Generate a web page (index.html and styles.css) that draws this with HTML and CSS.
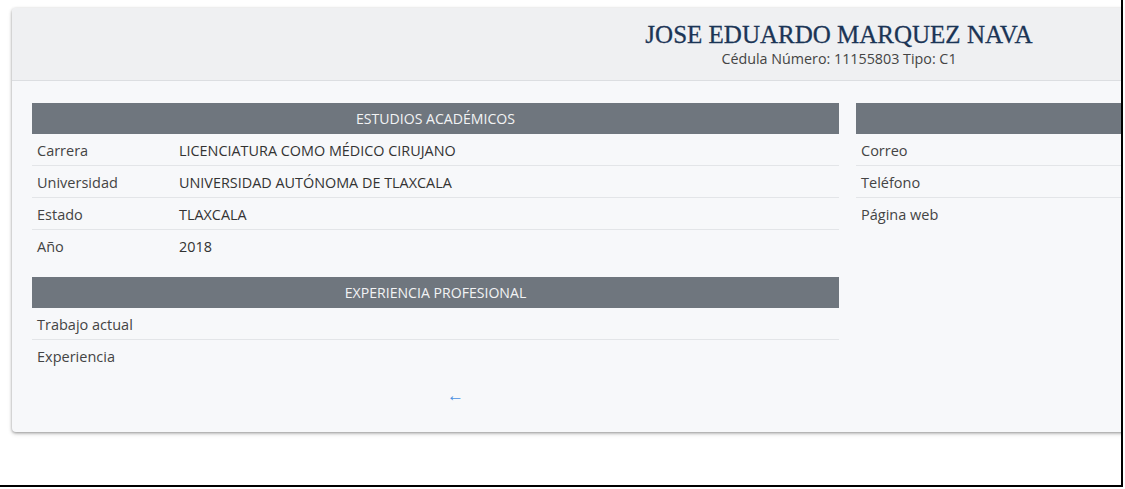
FILE: index.html
```html
<!DOCTYPE html>
<html lang="es">
<head>
<meta charset="utf-8">
<title>JOSE EDUARDO MARQUEZ NAVA</title>
<link rel="stylesheet" href="styles.css">
</head>
<body>
<div class="frame">
  <div class="card">
    <div class="card-header">
      <h1 class="name">JOSE EDUARDO MARQUEZ NAVA</h1>
      <div class="cedula">Cédula Número: 11155803 Tipo: C1</div>
    </div>
    <div class="card-body">
      <div class="col-main">
        <table class="info">
          <tr><th colspan="2" class="bar">ESTUDIOS ACADÉMICOS</th></tr>
          <tr><td class="lbl">Carrera</td><td class="val">LICENCIATURA COMO MÉDICO CIRUJANO</td></tr>
          <tr><td class="lbl">Universidad</td><td class="val">UNIVERSIDAD AUTÓNOMA DE TLAXCALA</td></tr>
          <tr><td class="lbl">Estado</td><td class="val">TLAXCALA</td></tr>
          <tr class="last"><td class="lbl">Año</td><td class="val">2018</td></tr>
        </table>
        <table class="info second">
          <tr><th colspan="2" class="bar">EXPERIENCIA PROFESIONAL</th></tr>
          <tr><td class="lbl">Trabajo actual</td><td class="val"></td></tr>
          <tr class="last"><td class="lbl">Experiencia</td><td class="val"></td></tr>
        </table>
        <div class="back"><a href="#" class="back-link">&larr;</a></div>
      </div>
      <div class="col-side">
        <table class="info">
          <tr><th colspan="2" class="bar">&nbsp;</th></tr>
          <tr><td class="lbl">Correo</td><td class="val"></td></tr>
          <tr><td class="lbl">Teléfono</td><td class="val"></td></tr>
          <tr class="last"><td class="lbl">Página web</td><td class="val"></td></tr>
        </table>
      </div>
    </div>
  </div>
</div>
</body>
</html>
```
FILE: styles.css
```css
html, body {
  margin: 0;
  padding: 0;
  background: #ffffff;
  overflow: hidden;
}
body {
  font-family: "Open Sans", "Liberation Sans", sans-serif;
  font-size: 14px;
  color: #333;
}
.frame {
  width: 1123px;
  height: 487px;
  border-right: 2px solid #000;
  border-bottom: 2px solid #000;
  overflow: hidden;
  padding: 8px 0 0 12px;
  box-sizing: border-box;
}
.card {
  width: 1654px;
  background: #f7f8fa;
  border-radius: 4px;
  box-shadow: 0 1px 3px rgba(0,0,0,0.35), 0 2px 5px rgba(0,0,0,0.12);
}
.card-header {
  background: #eff0f2;
  border-bottom: 1px solid #dcdee1;
  height: 73px;
  box-sizing: border-box;
  padding-top: 12px;
  text-align: center;
  border-radius: 4px 4px 0 0;
}
.name {
  margin: 0;
  font-family: "Liberation Serif", "Times New Roman", serif;
  font-weight: normal;
  font-size: 25px;
  line-height: 29px;
  color: #1b3556;
  -webkit-text-stroke: 0.3px #1b3556;
}
.cedula {
  font-size: 14.3px;
  line-height: 19px;
  color: #444;
}
.card-body {
  display: grid;
  grid-template-columns: 807px 1fr;
  column-gap: 17px;
  padding: 22px 20px 0 20px;
}
.info {
  width: 100%;
  border-collapse: collapse;
}
.info.second {
  margin-top: 16px;
}
.bar {
  background: #6f767e;
  color: #f2f3f4;
  font-weight: normal;
  font-size: 14.1px;
  height: 31px;
  padding: 0;
  text-align: center;
}
.info td {
  height: 29px;
  padding: 2px 5px 0 5px;
  border-bottom: 1px solid #e3e5e8;
  vertical-align: middle;
  line-height: 20px;
}
.info tr.last td {
  border-bottom: none;
}
.lbl {
  width: 132px;
  color: #444;
  font-size: 14.5px;
}
.val {
  color: #333;
  font-size: 14.4px;
}
.back {
  text-align: center;
  padding: 13px 0 25px 40px;
  line-height: 22px;
}
.back-link {
  color: #4a90e2;
  text-decoration: none;
  font-size: 17px;
}
```
